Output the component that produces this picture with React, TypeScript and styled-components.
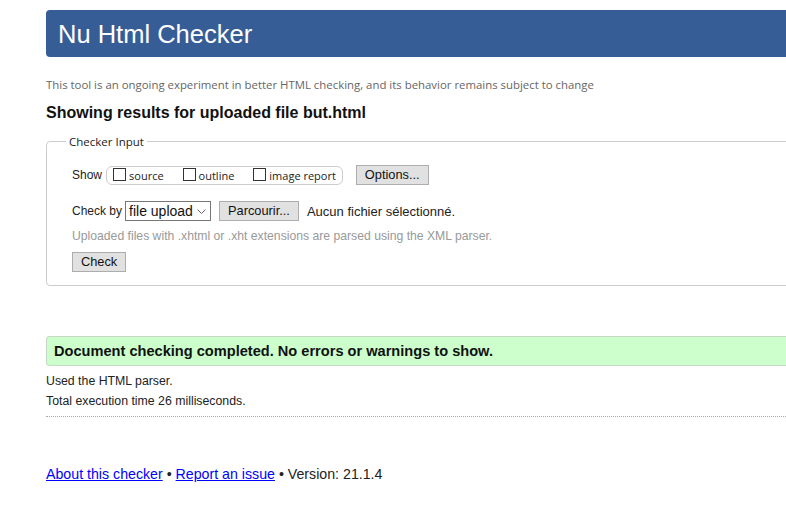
import React from "react";
import styled, { createGlobalStyle } from "styled-components";

const Global = createGlobalStyle`
  html, body { margin: 0; padding: 0; overflow: hidden; background: #fff; }
  body { font-family: "Liberation Sans", Arial, sans-serif; color: #222; }
`;

const Page = styled.div`
  width: 900px;
  margin-left: 46px;
  padding-top: 10px;
`;

const Header = styled.h1`
  margin: 0;
  height: 47px;
  background: #365d95;
  border-radius: 4px;
  color: #fff;
  font-weight: normal;
  font-size: 25.5px;
  line-height: 48px;
  padding-left: 12px;
`;

const Subtitle = styled.p`
  margin: 20px 0 0;
  font-family: "Open Sans", sans-serif;
  font-size: 11.4px;
  color: #666;
  line-height: 16px;
`;

const ResultTitle = styled.h2`
  margin: 10px 0 0;
  font-size: 16px;
  font-weight: bold;
  line-height: 20px;
  color: #111;
`;

const Fieldset = styled.fieldset`
  margin: 11px 0 0;
  padding: 16px 25px 13px;
  border: 1px solid #ccc;
  border-radius: 4px;
`;

const Legend = styled.legend`
  margin-left: -6px;
  padding: 0 3px;
  font-family: "Open Sans", sans-serif;
  font-size: 11.5px;
  color: #222;
`;

const Row = styled.div<{ mb?: number }>`
  display: flex;
  align-items: center;
  gap: 8px;
  font-size: 12px;
  color: #222;
  height: 20px;
  margin-bottom: ${(p) => p.mb ?? 0}px;
`;

const Pill = styled.div`
  display: flex;
  align-items: center;
  gap: 19px;
  border: 1px solid #ccc;
  border-radius: 6px;
  height: 17px;
  padding: 0 6px 0 6px;
  margin-left: -4px;
  margin-right: 5px;
`;

const CheckLabel = styled.label`
  display: flex;
  align-items: center;
  gap: 3px;
  font-family: "Open Sans", sans-serif;
  font-size: 11px;
  color: #222;
`;

const Box = styled.span`
  display: inline-block;
  width: 11px;
  height: 11px;
  border: 1px solid #333;
  background: #fff;
  margin-top: -2px;
`;

const Button = styled.button`
  font-family: "Liberation Sans", Arial, sans-serif;
  font-size: 12.8px;
  color: #111;
  background: #e1e1e1;
  border: 1px solid #adadad;
  height: 20px;
  padding: 0 8px;
  line-height: 18px;
`;

const Select = styled.div`
  display: flex;
  align-items: center;
  justify-content: space-between;
  width: 77px;
  height: 18px;
  border: 1px solid #767676;
  padding: 0 4px 0 3px;
  font-size: 14px;
  color: #111;
  margin-left: -5px;
`;

const Status = styled.span`
  font-size: 13px;
`;

const Hint = styled.p`
  margin: 7px 0 8px;
  font-size: 12.2px;
  color: #999;
  line-height: 16px;
`;

const Success = styled.div`
  margin-top: 50px;
  height: 28px;
  background: #ccffcc;
  border: 1px solid #c5d9c5;
  border-radius: 3px;
  padding-left: 7px;
  font-size: 14.6px;
  font-weight: bold;
  line-height: 29px;
  color: #111;
`;

const Info = styled.p`
  margin: 0;
  font-size: 12.3px;
  color: #222;
  line-height: 20px;
`;

const InfoList = styled.div`
  margin-top: 5px;
  padding-bottom: 5px;
  border-bottom: 1px dotted #aaa;
`;

const Footer = styled.p`
  margin: 49px 0 0;
  font-size: 14.2px;
  color: #222;
`;

const Link = styled.a`
  color: #00f;
  text-decoration: underline;
`;

const Check = ({ label }: { label: string }) => (
  <CheckLabel>
    <Box />
    {label}
  </CheckLabel>
);

export default function App() {
  return (
    <>
      <Global />
      <Page>
        <Header>Nu Html Checker</Header>
        <Subtitle>
          This tool is an ongoing experiment in better HTML checking, and its behavior remains subject to change
        </Subtitle>
        <ResultTitle>Showing results for uploaded file but.html</ResultTitle>
        <Fieldset>
          <Legend>Checker Input</Legend>
          <Row mb={16}>
            <span>Show</span>
            <Pill>
              <Check label="source" />
              <Check label="outline" />
              <Check label="image report" />
            </Pill>
            <Button>Options...</Button>
          </Row>
          <Row>
            <span>Check by</span>
            <Select>
              <span>file upload</span>
              <svg width="9" height="5" viewBox="0 0 9 5">
                <path d="M0.5 0.5 L4.5 4.5 L8.5 0.5" fill="none" stroke="#666" strokeWidth="1" />
              </svg>
            </Select>
            <Button>Parcourir...</Button>
            <Status>Aucun fichier sélectionné.</Status>
          </Row>
          <Hint>Uploaded files with .xhtml or .xht extensions are parsed using the XML parser.</Hint>
          <Button>Check</Button>
        </Fieldset>
        <Success>Document checking completed. No errors or warnings to show.</Success>
        <InfoList>
          <Info>Used the HTML parser.</Info>
          <Info>Total execution time 26 milliseconds.</Info>
        </InfoList>
        <Footer>
          <Link href="#">About this checker</Link> • <Link href="#">Report an issue</Link> • Version: 21.1.4
        </Footer>
      </Page>
    </>
  );
}
